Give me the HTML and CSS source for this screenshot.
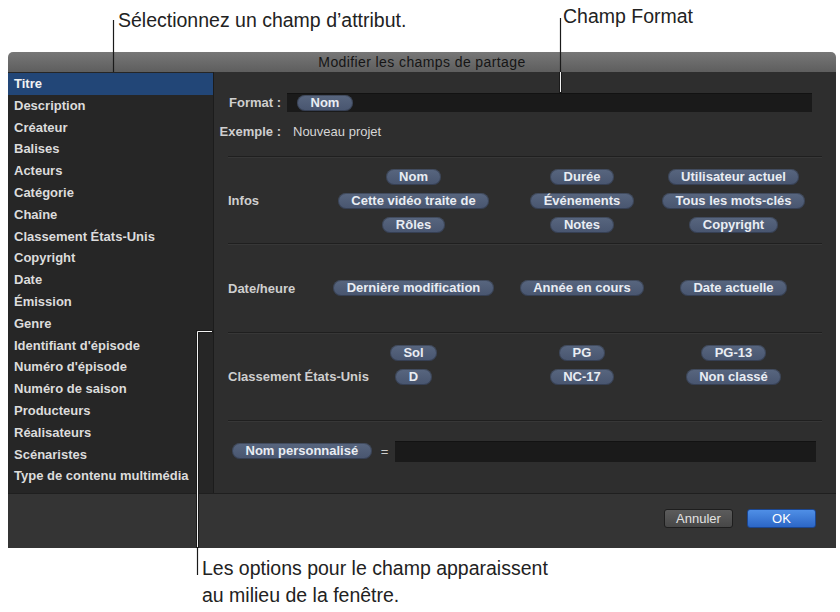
FILE: index.html
```html
<!DOCTYPE html>
<html>
<head>
	<title>Modifier les champs de partage</title>
	<link rel="stylesheet" href="styles.css">
</head>
<body>
	<div class="page">
		<div class="window">
			<div class="titlebar">Modifier les champs de partage</div>
			<div class="content">
				<ul class="sidebar">
					<li class="selected">Titre</li>
					<li>Description</li>
					<li>Créateur</li>
					<li>Balises</li>
					<li>Acteurs</li>
					<li>Catégorie</li>
					<li>Chaîne</li>
					<li>Classement États-Unis</li>
					<li>Copyright</li>
					<li>Date</li>
					<li>Émission</li>
					<li>Genre</li>
					<li>Identifiant d'épisode</li>
					<li>Numéro d'épisode</li>
					<li>Numéro de saison</li>
					<li>Producteurs</li>
					<li>Réalisateurs</li>
					<li>Scénaristes</li>
					<li>Type de contenu multimédia</li>
				</ul>
				<div class="main">
					<div class="format-row">
						<span class="label">Format :</span>
						<div class="field"><span class="token">Nom</span></div>
					</div>
					<div class="example-row">
						<span class="label">Exemple :</span>
						<span class="example">Nouveau projet</span>
					</div>

					<div class="section infos">
						<span class="section-label">Infos</span>
						<div class="tokens">
							<span class="token">Nom</span>
							<span class="token">Durée</span>
							<span class="token">Utilisateur actuel</span>
							<span class="token">Cette vidéo traite de</span>
							<span class="token">Événements</span>
							<span class="token">Tous les mots-clés</span>
							<span class="token">Rôles</span>
							<span class="token">Notes</span>
							<span class="token">Copyright</span>
						</div>
					</div>

					<div class="section dates">
						<span class="section-label">Date/heure</span>
						<div class="tokens">
							<span class="token">Dernière modification</span>
							<span class="token">Année en cours</span>
							<span class="token">Date actuelle</span>
						</div>
					</div>

					<div class="section ratings">
						<span class="section-label">Classement États-Unis</span>
						<div class="tokens">
							<span class="token">Sol</span>
							<span class="token">PG</span>
							<span class="token">PG-13</span>
							<span class="token">D</span>
							<span class="token">NC-17</span>
							<span class="token">Non classé</span>
						</div>
					</div>

					<div class="section custom">
						<span class="token">Nom personnalisé</span>
						<span class="equals">=</span>
						<div class="field"></div>
					</div>
				</div>
			</div>
			<div class="footer">
				<button class="btn">Annuler</button>
				<button class="btn primary">OK</button>
			</div>
		</div>

		<div class="callout callout-select">Sélectionnez un champ d’attribut.</div>
		<div class="callout callout-format">Champ Format</div>
		<div class="callout callout-options">Les options pour le champ apparaissent<br>au milieu de la fenêtre.</div>

		<svg class="leaders" width="840" height="612" viewBox="0 0 840 612">
			<!-- dark strokes -->
			<g stroke="#1a1a1a" fill="none">
				<line x1="113.5" y1="20" x2="113.5" y2="72" stroke-width="1.2"/>
				<line x1="560.5" y1="18" x2="560.5" y2="93" stroke-width="1.2"/>
				<line x1="560.5" y1="72" x2="560.5" y2="93" stroke-width="3"/>
				<polyline points="213,331.5 197.5,331.5 197.5,548" stroke-width="3"/>
				<line x1="197.5" y1="548" x2="197.5" y2="575" stroke-width="1.2"/>
			</g>
			<!-- light core where the leaders cross the dark window -->
			<g stroke="#f2f2f2" stroke-width="1" fill="none">
				<line x1="560.5" y1="72" x2="560.5" y2="92"/>
				<polyline points="212,331.5 197.5,331.5 197.5,547"/>
			</g>
		</svg>
	</div>
</body>
</html>
```

FILE: styles.css
```css
body {
	margin: 0;
	background: #fff;
	font-family: "Liberation Sans", Arial, sans-serif;
}
.page {
	position: relative;
	width: 840px;
	height: 612px;
	overflow: hidden;
}

/* window */
.window {
	margin: 52px 0 0 8px;
	width: 828px;
}
.titlebar {
	height: 20px;
	line-height: 20px;
	border-radius: 5px 5px 0 0;
	background: linear-gradient(#777, #5e5e5e);
	color: #151515;
	font-size: 14px;
	letter-spacing: 0.4px;
	text-align: center;
}
.content {
	display: flex;
	height: 421px;
}
.sidebar {
	flex: 0 0 205px;
	list-style: none;
	margin: 0;
	padding: 1px 0 0 0;
	background: #262626;
	color: #dcdcdc;
	font-size: 13px;
	font-weight: bold;
}
.sidebar li {
	height: 21.8px;
	line-height: 21.8px;
	padding-left: 6px;
	white-space: nowrap;
}
.sidebar li.selected {
	background: #224677;
	color: #f2f2f2;
}
.main {
	flex: 1;
	min-width: 0;
	background: #2e2e2e;
	border-left: 1px solid #1c1c1c;
	color: #cfcfcf;
	font-size: 13px;
	font-weight: bold;
	display: flex;
	flex-direction: column;
}

/* format / example */
.format-row {
	display: flex;
	align-items: center;
	margin: 21px 24px 0 0;
}
.label {
	flex: 0 0 67px;
	text-align: right;
	white-space: nowrap;
}
.format-row .field {
	margin-left: 6px;
}
.field {
	flex: 1;
	height: 19px;
	background: #1a1a1a;
	border-top: 1px solid #121212;
	box-sizing: border-box;
	display: flex;
	align-items: center;
	padding-left: 10px;
}
.example-row {
	display: flex;
	height: 16px;
	line-height: 16px;
	margin-top: 12px;
}
.example {
	margin-left: 12px;
	font-weight: normal;
	color: #d6d6d6;
}

/* token pills */
.token {
	display: inline-block;
	height: 16px;
	line-height: 16px;
	padding: 0 13.5px;
	border-radius: 8px;
	background: linear-gradient(#58667f, #48556f);
	box-shadow: inset 0 0 0 1px rgba(0, 0, 0, 0.25);
	color: #e9edf3;
	font-size: 13px;
	font-weight: bold;
	white-space: nowrap;
}

/* option sections */
.section {
	display: flex;
	align-items: flex-start;
	margin: 0 14px;
	border-top: 1px solid #1f1f1f;
	box-shadow: inset 0 1px 0 #373737;
	box-sizing: border-box;
}
.section-label {
	flex: 0 0 102px;
	min-width: 0;
	align-self: center;
	white-space: nowrap;
}
.tokens {
	flex: 0 0 auto;
	display: grid;
	grid-template-columns: 167px 170px 133px;
	grid-auto-rows: 24px;
	align-items: center;
	justify-items: center;
}
.infos {
	margin-top: 16px;
	height: 87px;
}
.infos .tokens,
.ratings .tokens {
	margin-top: 8px;
}
.dates {
	height: 89px;
}
.dates .tokens {
	align-self: center;
}
.ratings {
	height: 88px;
}
.custom {
	height: 73px;
	align-items: center;
	padding: 20px 0 32px 4px;
}
.custom .field {
	height: 21px;
	margin-right: 6px;
}
.equals {
	margin: 0 7px 0 9px;
	font-weight: normal;
}

/* footer */
.footer {
	height: 55px;
	box-sizing: border-box;
	background: #343434;
	border-top: 1px solid #1f1f1f;
	display: flex;
	justify-content: flex-end;
	align-items: flex-start;
	gap: 14px;
	padding: 15px 20px 0 0;
}
.btn {
	width: 69px;
	height: 19px;
	padding: 0;
	border: 1px solid #1e1e1e;
	border-radius: 3px;
	background: linear-gradient(#5c5c5c, #474747);
	color: #e2e2e2;
	font-family: "Liberation Sans", Arial, sans-serif;
	font-size: 13px;
}
.btn.primary {
	border-color: #1b4690;
	background: linear-gradient(#4f8fe6, #2c66c6);
	color: #fff;
}

/* annotations */
.callout {
	position: absolute;
	font-size: 19.5px;
	line-height: 23px;
	color: #222;
	white-space: nowrap;
}
.callout-select {
	left: 118px;
	top: 9px;
}
.callout-format {
	left: 563px;
	top: 5px;
}
.callout-options {
	left: 202px;
	top: 555px;
	line-height: 27px;
}
.leaders {
	position: absolute;
	left: 0;
	top: 0;
	pointer-events: none;
}
```
